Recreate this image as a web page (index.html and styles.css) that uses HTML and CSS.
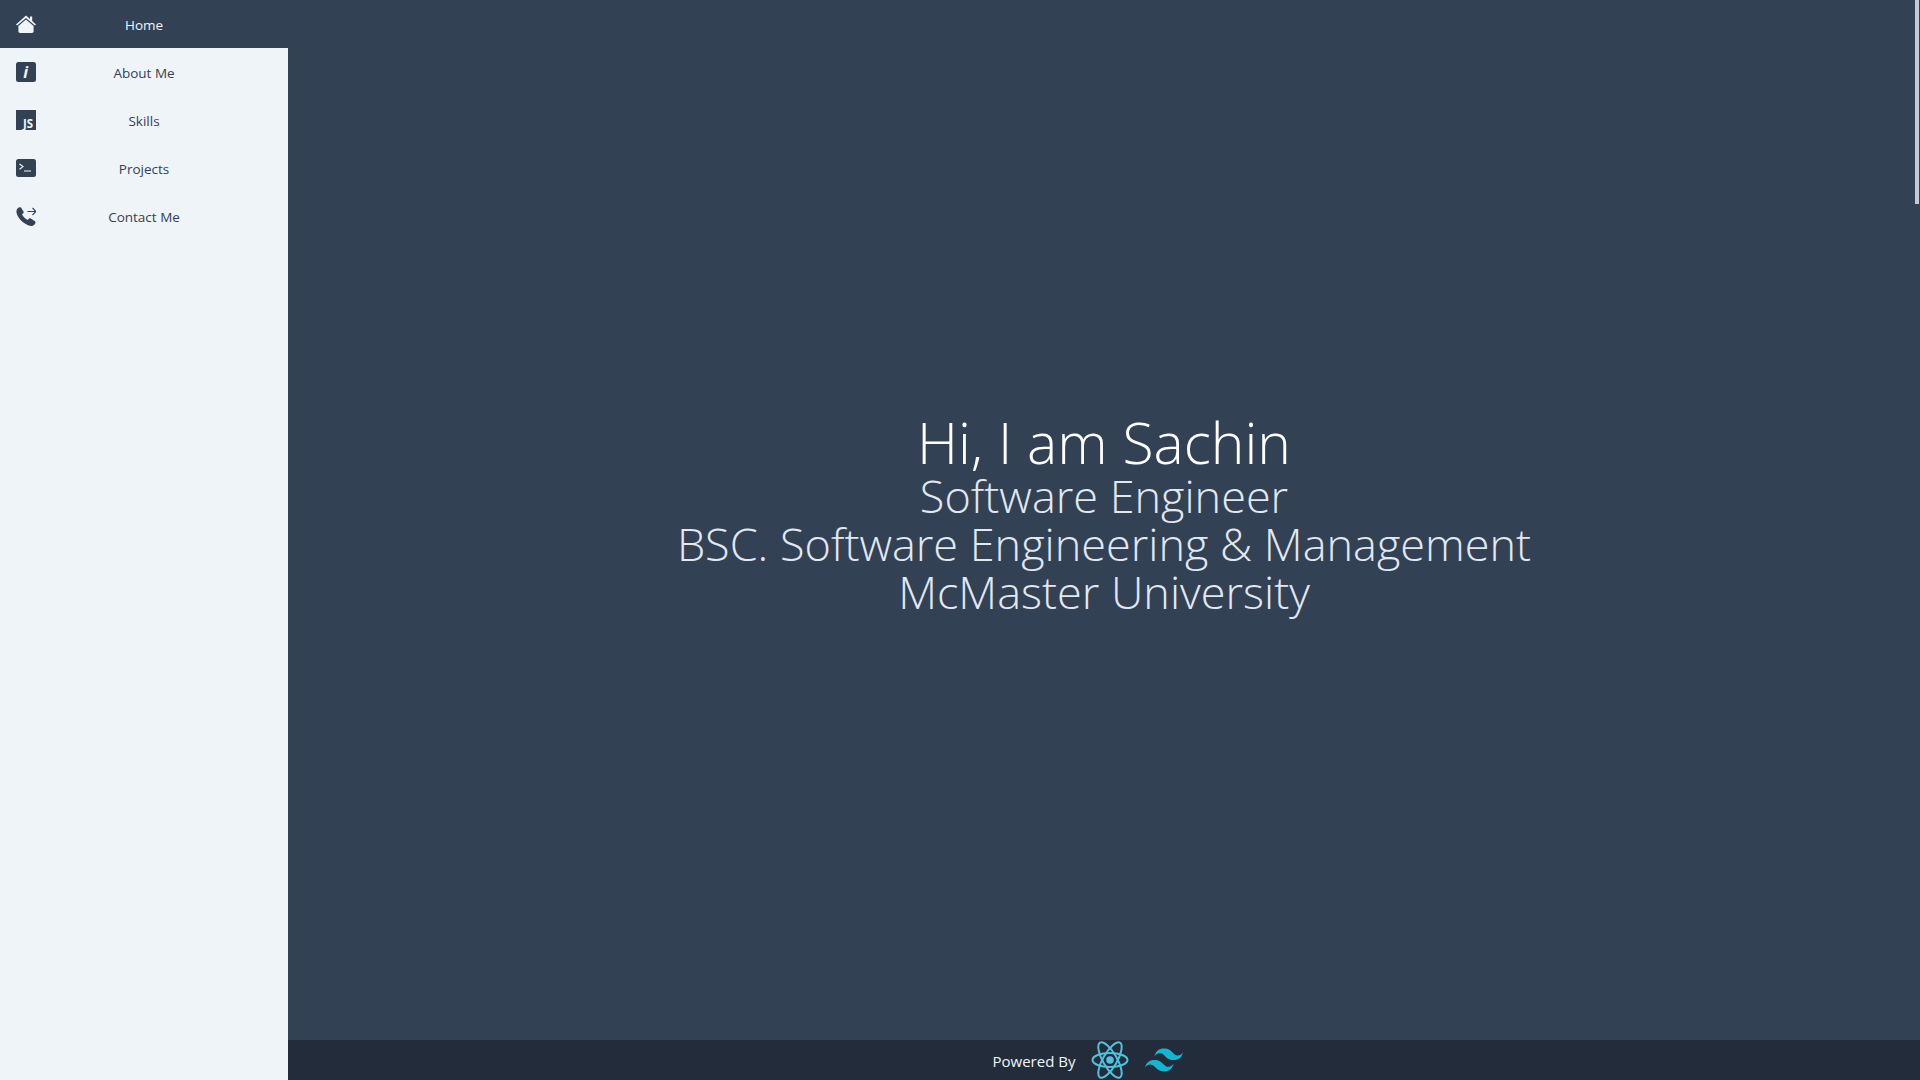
FILE: index.html
```html
<!DOCTYPE html>
<html lang="en">
<head>
  <meta charset="UTF-8">
  <meta name="viewport" content="width=device-width, initial-scale=1.0">
  <title>Sachin</title>
  <link rel="stylesheet" href="styles.css">
</head>
<body>
  <aside class="sidebar">
    <a class="nav-item active" href="#">
      <svg class="nav-icon" viewBox="0 0 20 20"><path d="M10 1.500 14 5V2.600h2.200v4.300L20 10.400l-1.100 1.200L10 3.900 1.100 11.600 0 10.400z"/><path d="M10 5.600 17.600 12v5.200c0 1-.7 1.700-1.700 1.700H4.100c-1 0-1.700-.7-1.700-1.700V12z"/></svg>
      <span class="nav-label">Home</span>
    </a>
    <a class="nav-item" href="#">
      <svg class="nav-icon" viewBox="0 0 20 20"><rect width="20" height="20" rx="2.500"/><text class="icon-i" x="9.500" y="16" text-anchor="middle">i</text></svg>
      <span class="nav-label">About Me</span>
    </a>
    <a class="nav-item" href="#">
      <svg class="nav-icon" viewBox="0 0 20 20"><rect width="20" height="20"/><text class="icon-js" x="12" y="17.500" text-anchor="middle">JS</text></svg>
      <span class="nav-label">Skills</span>
    </a>
    <a class="nav-item" href="#">
      <svg class="nav-icon" viewBox="0 0 20 20"><rect y="1" width="20" height="18" rx="2.500"/><path class="icon-line" d="M3.500 6 7 8.600 3.500 11.200M8 13h7"/></svg>
      <span class="nav-label">Projects</span>
    </a>
    <a class="nav-item" href="#">
      <svg class="nav-icon" viewBox="0 0 20 20"><path d="M1.500 2.500C2.500 1.200 4 .8 5 1.500l2.500 4c.5 1 0 1.700-1.500 2.700 1 2.300 3.500 4.800 5.800 5.800 1-1.400 1.900-2 3-1.400l4.200 2.700c.8.700.5 2.200-.7 3.500-1.500 1.500-3.800 1.600-6.800.2C5.500 16 1.500 11 .6 7 .2 5 .5 3.500 1.500 2.500z"/><path class="icon-line" d="M11.500 5.500H20M16.500 2 20 5.500 16.500 9"/></svg>
      <span class="nav-label">Contact Me</span>
    </a>
  </aside>

  <div class="content">
    <main class="hero">
      <h1>Hi, I am Sachin</h1>
      <p>Software Engineer</p>
      <p>BSC. Software Engineering &amp; Management</p>
      <p>McMaster University</p>
    </main>
    <footer class="footer">
      <span class="footer-text">Powered By</span>
      <svg class="logo-react" viewBox="-19 -20 38 40">
        <circle r="3.800"/>
        <g class="orbits">
          <ellipse rx="17.500" ry="7"/>
          <ellipse rx="20" ry="7" transform="rotate(60)"/>
          <ellipse rx="20" ry="7" transform="rotate(120)"/>
        </g>
      </svg>
      <svg class="logo-tailwind" viewBox="0 0 24 24"><path d="M12.001 4.800c-3.200 0-5.200 1.600-6 4.800 1.200-1.600 2.600-2.200 4.200-1.800.913.228 1.565.89 2.288 1.624C13.666 10.618 15.027 12 18.001 12c3.200 0 5.200-1.600 6-4.800-1.200 1.600-2.600 2.200-4.200 1.800-.913-.228-1.565-.89-2.288-1.624C16.337 6.182 14.976 4.800 12.001 4.800zm-6 7.200c-3.200 0-5.200 1.600-6 4.800 1.200-1.600 2.600-2.200 4.200-1.800.913.228 1.565.89 2.288 1.624 1.177 1.194 2.538 2.576 5.512 2.576 3.200 0 5.200-1.600 6-4.800-1.200 1.600-2.600 2.200-4.200 1.800-.913-.228-1.565-.89-2.288-1.624C10.337 13.382 8.976 12 6.001 12z"/></svg>
    </footer>
  </div>

  <div class="scroll-thumb"></div>
</body>
</html>
```

FILE: styles.css
```css
* {
  box-sizing: border-box;
}
html, body {
  height: 100%;
  margin: 0;
}
body {
  display: flex;
  overflow: hidden;
  font-family: "Open Sans", sans-serif;
  background: #334155;
  color: #f1f5f9;
}
.sidebar {
  width: 288px;
  flex: none;
  background: #eff4f9;
  color: #334155;
}
.nav-item {
  display: grid;
  grid-template-columns: 1fr auto 1fr;
  align-items: center;
  height: 48px;
  padding: 0 16px;
  font-size: 13.5px;
  color: inherit;
  text-decoration: none;
}
.nav-item.active {
  background: #334155;
  color: #f1f5f9;
}
.nav-icon {
  width: 20px;
  height: 20px;
  fill: currentColor;
}
.nav-label {
  grid-column: 2;
  padding-top: 1px;
}
.icon-i {
  font: italic bold 16px "Open Sans", sans-serif;
  fill: #f1f5f9;
}
.icon-js {
  font: bold 11.500px "Open Sans", sans-serif;
  fill: #f1f5f9;
}
.icon-line {
  fill: none;
  stroke: #f1f5f9;
  stroke-width: 1.100;
}
.nav-item:last-child .icon-line {
  stroke: #334155;
}
.content {
  flex: 1;
  display: flex;
  flex-direction: column;
  min-width: 0;
}
.hero {
  flex: 1;
  display: flex;
  flex-direction: column;
  align-items: center;
  justify-content: center;
  padding-bottom: 12px;
  text-align: center;
  font-weight: 300;
}
.hero h1 {
  margin: 0;
  font-size: 57px;
  line-height: 60px;
  font-weight: 300;
  color: #fff;
}
.hero p {
  margin: 0;
  font-size: 45px;
  line-height: 48px;
  color: #e2e8f0;
}
.footer {
  height: 40px;
  flex: none;
  display: flex;
  align-items: center;
  justify-content: center;
  gap: 16px;
  padding-right: 32px;
  background: #222c3a;
  font-size: 15px;
}
.footer-text {
  padding-top: 2px;
}
.logo-react {
  width: 38px;
  height: 40px;
}
.logo-react circle {
  fill: #4fc3dc;
}
.orbits {
  fill: none;
  stroke: #4fc3dc;
  stroke-width: 2;
}
.logo-tailwind {
  width: 38px;
  height: 38px;
  fill: #13b5cf;
}
.scroll-thumb {
  position: absolute;
  top: 0;
  right: 1px;
  width: 4px;
  height: 204px;
  background: #c3cad6;
}
```
